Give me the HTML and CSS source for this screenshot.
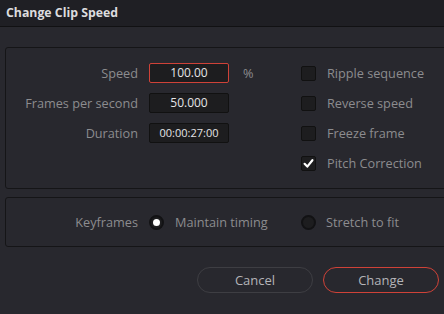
FILE: index.html
```html
<!DOCTYPE html>
<html lang="en">
<head>
  <meta charset="UTF-8" />
  <title>Change Clip Speed</title>
  <link rel="stylesheet" href="styles.css">
</head>
<body>
  <div class="dialog">
    <div class="titlebar">Change Clip Speed</div>

    <!-- Speed settings -->
    <div class="panel speed-panel">
      <div class="fields">
        <label class="label">Speed</label>
        <div class="field active">100.00</div>
        <span class="unit">%</span>

        <label class="label">Frames per second</label>
        <div class="field">50.000</div>
        <span class="unit"></span>

        <label class="label">Duration</label>
        <div class="field small">00:00:27:00</div>
        <span class="unit"></span>
      </div>

      <ul class="options">
        <li><span class="check"></span>Ripple sequence</li>
        <li><span class="check"></span>Reverse speed</li>
        <li><span class="check"></span>Freeze frame</li>
        <li>
          <span class="check">
            <svg width="15" height="15" viewBox="0 0 15 15"><path d="M3.6 7.8 L6.3 10.6 L11.4 4.2" fill="none" stroke="#fff" stroke-width="2.2" stroke-linecap="round" stroke-linejoin="round"/></svg>
          </span>Pitch Correction
        </li>
      </ul>
    </div>

    <!-- Keyframes -->
    <div class="panel key-panel">
      <label class="label">Keyframes</label>
      <div class="radio-opt first"><span class="radio on"></span>Maintain timing</div>
      <div class="radio-opt"><span class="radio"></span>Stretch to fit</div>
    </div>

    <div class="actions">
      <button class="btn">Cancel</button>
      <button class="btn primary">Change</button>
    </div>
  </div>
</body>
</html>
```

FILE: styles.css
```css
:root {
  --bg: #28282e;
  --title-bg: #1f1f24;
  --border: #151517;
  --field-bg: #1d1d1f;
  --label: #8c8c8f;
  --value: #e4e4e6;
  --accent: #cf4238;
}

* {
  box-sizing: border-box;
  margin: 0;
  padding: 0;
}

body {
  background: var(--bg);
  font-family: 'Open Sans', 'Liberation Sans', sans-serif;
  font-size: 12.7px;
  color: var(--label);
  width: 444px;
  height: 314px;
  overflow: hidden;
}

.titlebar {
  height: 27px;
  background: var(--title-bg);
  border-bottom: 1px solid #111113;
  color: #dcdcde;
  font-weight: 700;
  font-size: 12.3px;
  line-height: 25px;
  padding-left: 6px;
}

.panel {
  border: 1px solid var(--border);
  border-radius: 3px;
  margin-left: 5px;
  margin-right: -8px;
}

.speed-panel {
  margin-top: 20px;
  height: 142px;
  padding-top: 10px;
  display: flex;
}

.fields {
  display: grid;
  grid-template-columns: 143px 80px 72px;
  grid-auto-rows: 30px;
  align-items: center;
}

.label {
  text-align: right;
  padding-right: 11px;
  color: var(--label);
}

.field {
  height: 20px;
  background: var(--field-bg);
  border: 1px solid #111;
  border-radius: 2px;
  color: var(--value);
  font-size: 12px;
  text-align: center;
  line-height: 18px;
}

.field.active {
  border-color: var(--accent);
}

.field.small {
  font-size: 11px;
}

.unit {
  padding-left: 14px;
}

.options {
  list-style: none;
}

.options li {
  height: 30px;
  display: flex;
  align-items: center;
  gap: 11px;
}

.check {
  width: 15px;
  height: 15px;
  background: var(--field-bg);
  border: 1px solid #111;
  border-radius: 2px;
  display: flex;
}

.check svg {
  margin: -1px;
}

.key-panel {
  margin-top: 8px;
  height: 50px;
  display: flex;
  align-items: center;
}

.key-panel .label {
  width: 143px;
}

.radio-opt {
  display: flex;
  align-items: center;
  gap: 11px;
}

.radio-opt.first {
  width: 152px;
}

.radio-opt + .radio-opt {
  gap: 10px;
}

.radio {
  width: 15px;
  height: 15px;
  border-radius: 50%;
  background: var(--field-bg);
  border: 2px solid #121214;
  display: flex;
  align-items: center;
  justify-content: center;
}

.radio.on::after {
  content: '';
  width: 7px;
  height: 7px;
  border-radius: 50%;
  background: #fff;
}

.actions {
  display: flex;
  justify-content: flex-end;
  gap: 10px;
  padding: 20px 5px 0 0;
}

.btn {
  width: 116px;
  height: 26px;
  border-radius: 13px;
  border: 1px solid #3e3e43;
  background: var(--bg);
  color: #b4b4b8;
  font-family: inherit;
  font-size: 13px;
}

.btn.primary {
  border-color: var(--accent);
}
```
